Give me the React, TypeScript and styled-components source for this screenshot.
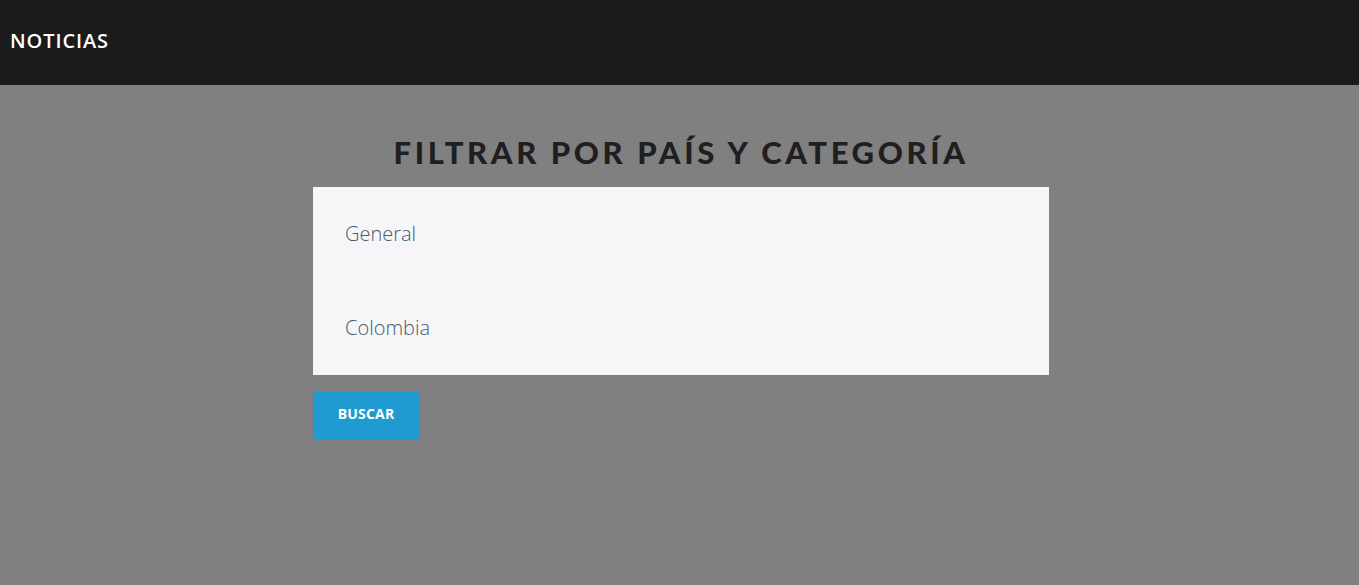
import React from "react";
import styled, { createGlobalStyle } from "styled-components";

const Global = createGlobalStyle`
  html, body { margin: 0; padding: 0; background: #808080; }
  body { font-family: "Open Sans", "Liberation Sans", sans-serif; }
`;

const Page = styled.div`
  min-height: 585px;
  background: #808080;
  display: flex;
  flex-direction: column;
`;

const Header = styled.header`
  height: 85px;
  background: #1b1b1b;
  display: flex;
  align-items: center;
  padding: 0 10px;
  box-sizing: border-box;
`;

const Brand = styled.span`
  color: #ffffff;
  font-family: "Open Sans", sans-serif;
  font-weight: 600;
  font-size: 20px;
  letter-spacing: 0.9px;
  margin-top: -4px;
`;

const Main = styled.main`
  display: flex;
  flex-direction: column;
  align-items: center;
  padding-top: 46px;
  padding-left: 3px;
`;

const Title = styled.h2`
  margin: 0 0 14px;
  font-family: "Lato", sans-serif;
  font-weight: 900;
  font-size: 31px;
  letter-spacing: 3.6px;
  color: #1f1f22;
  line-height: 42px;
  text-transform: uppercase;
`;

const Form = styled.form`
  width: 736px;
  display: flex;
  flex-direction: column;
  align-items: flex-start;
`;

const Fields = styled.div`
  width: 100%;
  background: #f6f6f8;
  display: flex;
  flex-direction: column;
`;

const Select = styled.select`
  appearance: none;
  -webkit-appearance: none;
  border: none;
  outline: none;
  background: transparent;
  height: 94px;
  padding: 0 32px 2px;
  font-family: "Open Sans", sans-serif;
  font-weight: 300;
  font-size: 20px;
  color: #4c5870;
  width: 100%;
  box-sizing: border-box;
`;

const Button = styled.button`
  margin-top: 16px;
  width: 106px;
  height: 48px;
  padding: 0 0 3px;
  border: none;
  background: #1f9bd1;
  color: #ffffff;
  font-family: "Open Sans", sans-serif;
  font-weight: 700;
  font-size: 14px;
  letter-spacing: 0.2px;
  cursor: pointer;
`;

export default function App() {
  return (
    <Page>
      <Global />
      <Header>
        <Brand>NOTICIAS</Brand>
      </Header>
      <Main>
        <Title>Filtrar por país y categoría</Title>
        <Form onSubmit={(e) => e.preventDefault()}>
          <Fields>
            <Select defaultValue="general">
              <option value="general">General</option>
            </Select>
            <Select defaultValue="co">
              <option value="co">Colombia</option>
            </Select>
          </Fields>
          <Button type="submit">BUSCAR</Button>
        </Form>
      </Main>
    </Page>
  );
}
